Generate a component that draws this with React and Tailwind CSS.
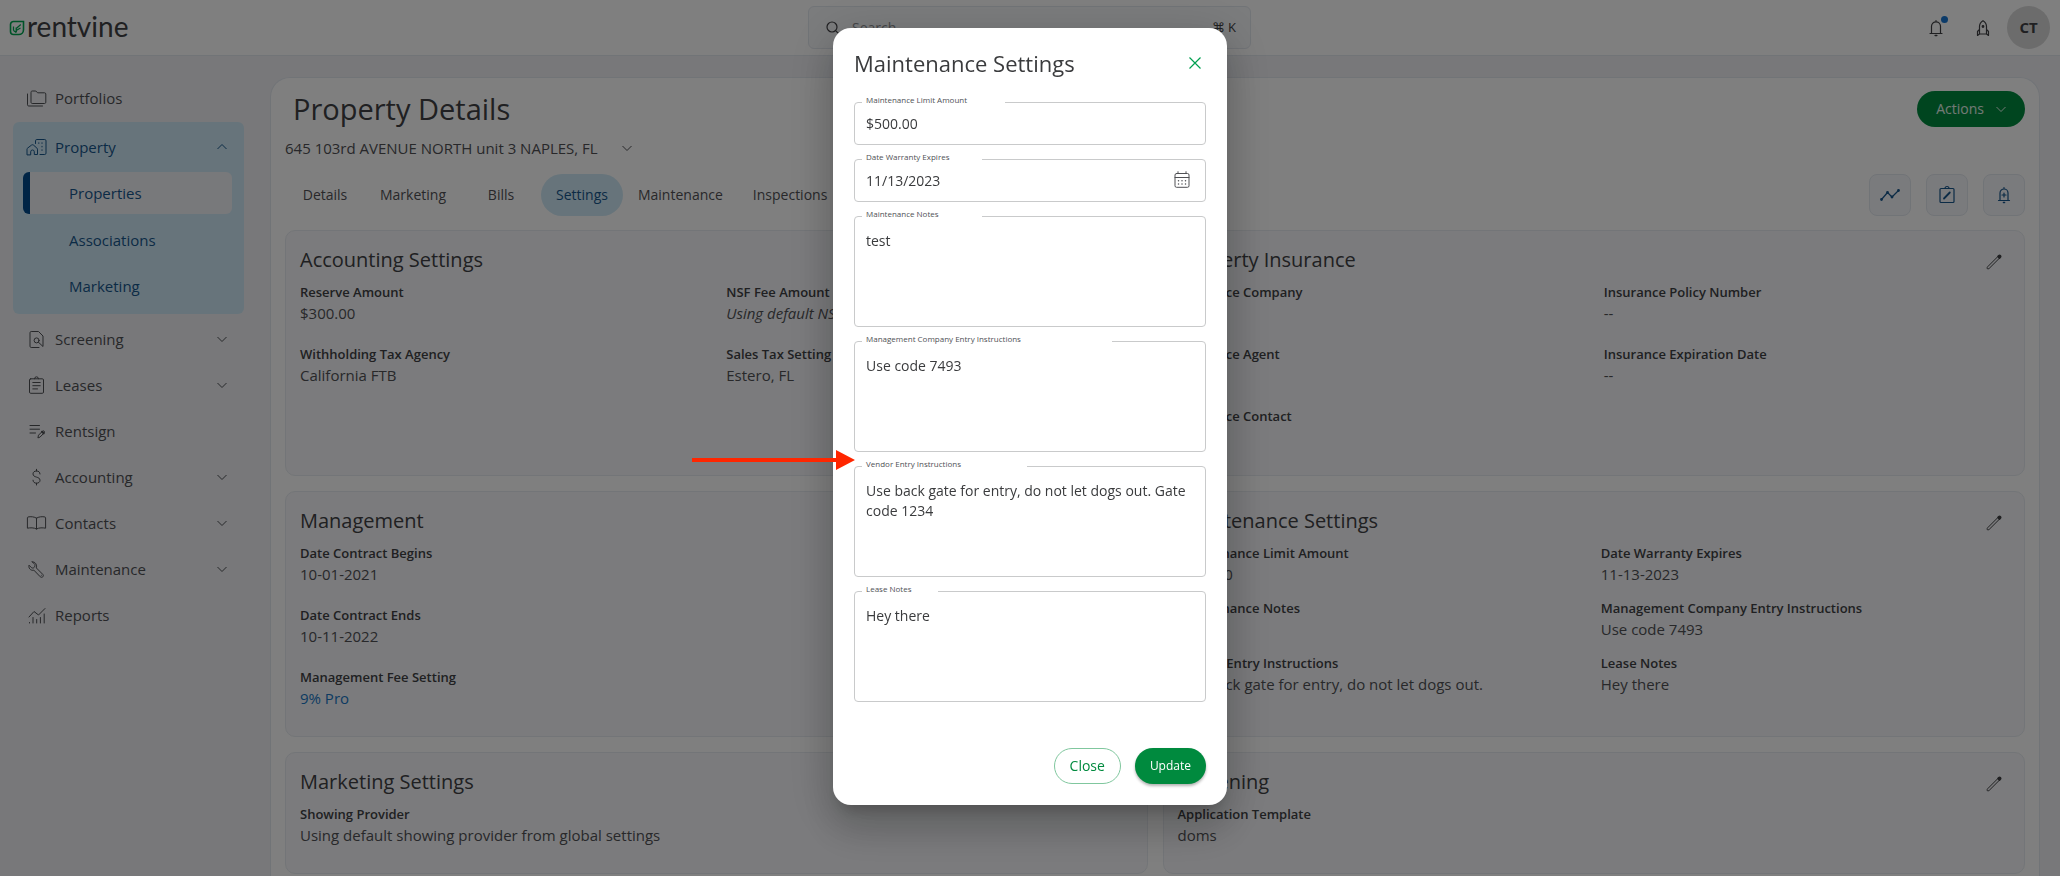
import { useState } from 'react'

const navItems = [
  { label: 'Screening', icon: 'screening', expandable: true },
  { label: 'Leases', icon: 'leases', expandable: true },
  { label: 'Rentsign', icon: 'rentsign' },
  { label: 'Accounting', icon: 'accounting', expandable: true },
  { label: 'Contacts', icon: 'contacts', expandable: true },
  { label: 'Maintenance', icon: 'maintenance', expandable: true },
  { label: 'Reports', icon: 'reports' },
]

const tabs = ['Details', 'Marketing', 'Bills', 'Settings', 'Maintenance', 'Inspections']

const icons = {
  portfolios: (
    <>
      <path d="M5 4.200c0-.7.5-1.200 1.200-1.200h3.600l1.800 1.800h7c.7 0 1.200.5 1.200 1.200v8.300c0 .7-.5 1.200-1.200 1.200H6.200c-.7 0-1.200-.5-1.200-1.200z" />
      <path d="M1.500 6v10.800c0 .7.5 1.200 1.200 1.200H16.500" />
    </>
  ),
  property: (
    <>
      <path d="M1 17.500v-5.300c0-.5.2-.9.6-1.100l3.900-3c.6-.5 1.400-.5 2 0l3.400 3c.4.300.6.7.6 1.100v5.300H8.300v-2.700a1.800 1.800 0 0 0-3.600 0v2.700z" />
      <path d="M9.500 6.500V3.800c0-.8.5-1.300 1.300-1.300h7.900c.8 0 1.300.5 1.300 1.300v12.400c0 .8-.5 1.300-1.300 1.300H14" />
      <path d="M12.800 5.800v.6M16 5.800v.6M16 9.300v.6M16 12.800v.6" />
    </>
  ),
  screening: (
    <>
      <path d="M13 18.500H5.200c-.7 0-1.200-.5-1.200-1.200V3.700c0-.7.5-1.200 1.200-1.200H12.500L17 7v10.500l-4.600-4.300" />
      <circle cx="10.600" cy="11.400" r="2.500" />
    </>
  ),
  leases: (
    <>
      <rect x="3.500" y="3.800" width="14" height="14.500" rx="1.200" />
      <path d="M8.500 3.800a2 2 0 0 1 4 0M6.800 7.500h7.400M6.800 10.700h7.400M6.800 13.900h4.700" />
    </>
  ),
  rentsign: (
    <>
      <path d="M4 4.500h9.500M4 8.200h9.500M4 12h5.500" />
      <path d="M12 16.500l.5-2.300 4-4c.5-.5 1.300-.5 1.700 0s.4 1.200 0 1.700l-4 4z" />
      <path d="M16 10.700l1.700 1.700" strokeWidth="2" />
    </>
  ),
  accounting: (
    <path d="M14 7c0-2-1.500-3-3.500-3S7 5.100 7 6.900c0 4.200 7 2.200 7 6.400 0 1.800-1.500 2.900-3.500 2.900S7 15.100 7 13.200M10.500 2.300V4M10.500 16.200V18" />
  ),
  contacts: (
    <path d="M10.500 5.200C8.500 3.600 4.500 3.400 2 4c-.4.100-.6.400-.6.800v10.400c2.800-.6 6.600-.6 9.100.8 2.500-1.400 6.300-1.400 9.100-.8V4.800c0-.4-.2-.7-.6-.8-2.500-.6-6.500-.4-8.500 1.200zM10.500 5.200V16" />
  ),
  maintenance: (
    <path d="M6.300 2.900l2.600 2.600c.3 1-.2 2.800-1.200 3.300-.9.400-1.700.3-2.300-.2L3 6.200c-.4 2 .3 3.600 1.500 4.400 1 .7 2.200.9 3.300.5l6.500 6.700c.7.700 1.800.7 2.500 0s.7-1.700 0-2.400l-6.500-6.500c.5-1.300.4-2.900-.5-4.200-.8-1.200-2-1.900-3.500-1.800zM15.300 16.300h.01" />
  ),
  reports: (
    <path d="M3 12l5-5.500 4.500 3.500L19 3.500M3.500 17.500v.5M7 12.500V18M10.700 14.500V18M14.400 12.500V18M18.200 9V18" />
  ),
}

function NavIcon({ name }) {
  return (
    <svg
      viewBox="0 0 21 21"
      className="size-[21px] shrink-0"
      fill="none"
      stroke="currentColor"
      strokeWidth="1"
      strokeLinecap="round"
      strokeLinejoin="round"
      aria-hidden="true"
    >
      {icons[name]}
    </svg>
  )
}

function Chevron({ up }) {
  return (
    <svg viewBox="0 0 10 10" className="size-[10px] shrink-0" fill="none" stroke="currentColor" strokeWidth="1" aria-hidden="true">
      <path d={up ? 'M.5 7L5 2.500 9.500 7' : 'M.5 3L5 7.500 9.500 3'} />
    </svg>
  )
}

function Header() {
  return (
    <header className="flex h-14 shrink-0 items-center justify-between border-b border-[#e3e8ef] bg-white pl-[9px] pr-[10px]">
      <a href="#home" className="flex flex-1 items-center gap-[2px] text-[#404144]">
        <svg viewBox="0 0 16 16" className="size-4" fill="none" stroke="#00a651" aria-hidden="true">
          <path d="M4.500 1.500h10v8.300a4.700 4.700 0 0 1-4.700 4.700H4.500a3 3 0 0 1-3-3v-7a3 3 0 0 1 3-3z" strokeWidth="1.600" />
          <path d="M4.500 6.500v4M7.200 12.500V7.500M7.200 12.500l-2.700-2M7.200 10.500l4.300-2.500M7.200 8.500l4.600-4" strokeWidth="1.300" />
        </svg>
        <span className="pb-1 font-['Lato',sans-serif] text-[28px] leading-none">rentvine</span>
      </a>
      <label className="flex h-[43px] w-[443px] items-center rounded-[6px] border border-[#e3e8ef] bg-[#f7f8fb] pl-[17px] pr-[14px]">
        <svg viewBox="0 0 14 14" className="size-[14px] text-[#404144]" fill="none" stroke="currentColor" strokeWidth="1.200" aria-hidden="true">
          <circle cx="6" cy="6" r="5" />
          <path d="M9.600 9.600L13.500 13.500" />
        </svg>
        <input type="search" placeholder="Search" aria-label="Search" className="min-w-0 flex-1 px-3 text-sm outline-none placeholder:text-[#8a8d91]" />
        <kbd className="font-['Open_Sans','DejaVu_Sans',sans-serif] text-[13px] text-[#404144]">⌘ K</kbd>
      </label>
      <div className="flex flex-1 items-center justify-end text-[#404144]">
        <button type="button" aria-label="Notifications" className="relative mr-1 p-3">
          <svg viewBox="0 0 18 18" className="size-[18px]" fill="none" stroke="currentColor" strokeWidth="1.200" strokeLinecap="round" aria-hidden="true">
            <path d="M3 14.500h12M4.500 14.500V7.300a4.500 4.500 0 0 1 9 0v7.200M9 1.500v1.300" />
            <path d="M8.200 16.500h1.600" strokeWidth="1.600" />
          </svg>
          <span className="absolute right-[9px] top-[9px] size-[7px] rounded-full bg-[#1976d2]" />
        </button>
        <button type="button" aria-label="What's new" className="p-3">
          <svg viewBox="0 0 18 18" className="mx-px size-[18px]" fill="none" stroke="currentColor" strokeWidth="1.200" strokeLinejoin="round" aria-hidden="true">
            <path d="M5.500 15V7.500C5.500 5 7 3 9 1.700c2 1.300 3.500 3.300 3.500 5.800V15zM5.500 10.300L3.500 12.500v4l2-1.500M12.500 10.300l2 2.200v4l-2-1.500" />
            <circle cx="9" cy="7.500" r=".8" fill="currentColor" />
          </svg>
        </button>
        <button type="button" className="ml-[2px] size-[43px] rounded-full bg-[#d8d8d8] text-[15px] font-bold">CT</button>
      </div>
    </header>
  )
}

function Sidebar() {
  return (
    <nav className="flex w-[270px] shrink-0 flex-col pl-[13px] pr-[26px] pt-[18px] text-[15px] text-[#4f5054]">
      <a href="#portfolios" className="flex h-12 items-center gap-2 px-[13px]">
        <NavIcon name="portfolios" />
        Portfolios
      </a>
      <div className="rounded-[6px] bg-[#cfe9f6] px-[10px] pb-[5px] text-[#17568c]">
        <button type="button" className="flex h-[50px] w-full items-center gap-2 pl-[3px] pr-[7px]">
          <NavIcon name="property" />
          Property
          <span className="ml-auto">
            <Chevron up />
          </span>
        </button>
        <a href="#properties" className="mb-[3px] mr-[2px] flex h-[42px] items-center rounded-[6px] border-l-[7px] border-[#004a8c] bg-[#f1f2f6] pl-[39px]">
          Properties
        </a>
        <a href="#associations" className="flex h-[46px] items-center pl-[46px]">Associations</a>
        <a href="#marketing" className="flex h-[46px] items-center pl-[46px]">Marketing</a>
      </div>
      <ul className="pt-[2px]">
        {navItems.map((item) => (
          <li key={item.label}>
            <button type="button" className="flex h-[46px] w-full items-center gap-2 pl-[13px] pr-[17px]">
              <NavIcon name={item.icon} />
              {item.label}
              {item.expandable && (
                <span className="ml-auto">
                  <Chevron />
                </span>
              )}
            </button>
          </li>
        ))}
      </ul>
    </nav>
  )
}

function SquareButton({ label, children }) {
  return (
    <button type="button" aria-label={label} className="flex size-[42px] items-center justify-center rounded-lg border border-[#e3e8ef] bg-[#f4f6fa] text-[#17568c]">
      <svg viewBox="0 0 20 20" className="size-5" fill="none" stroke="currentColor" strokeWidth="1.200" strokeLinecap="round" strokeLinejoin="round" aria-hidden="true">
        {children}
      </svg>
    </button>
  )
}

function Card({ title, children }) {
  return (
    <section className="rounded-[10px] border border-[#e7ebf0] bg-[#f6f7fa] px-[14px] pb-[27px] pt-[13px] text-[#404144]">
      <div className="flex items-center justify-between pr-2">
        <h2 className="text-xl leading-8">{title}</h2>
        <button type="button" aria-label={'Edit ' + title} className="pt-1">
          <svg viewBox="0 0 16 16" className="size-4" fill="none" stroke="currentColor" strokeWidth="1" strokeLinejoin="round" aria-hidden="true">
            <path d="M1.300 14.700c-.4-.4-.2-1.300.3-1.900L11.900 2.500l1.600 1.600L3.200 14.400c-.6.500-1.500.7-1.900.3z" />
            <path d="M11.900 2.500l.9-.9c.5-.4 1.100-.4 1.500 0l.1.100c.4.400.4 1 0 1.500l-.9.900z" fill="currentColor" strokeWidth="1.500" />
          </svg>
        </button>
      </div>
      {children}
    </section>
  )
}

function Detail({ label, link, italic, children }) {
  return (
    <div>
      <dt className="text-[13px] font-semibold leading-5">{label}</dt>
      <dd className="min-h-[22px] text-[15px] leading-[22px] text-[#505155]">
        {link ? <a href="#fee" className="text-[#1976c5]">{children}</a> : italic ? <em>{children}</em> : children}
      </dd>
    </div>
  )
}

function PropertyDetails() {
  return (
    <main className="mr-5 mt-[21px] min-w-0 flex-1 rounded-t-[20px] border border-b-0 border-[#e3e8ef] bg-white px-[14px] pt-[13px]">
      <div className="flex items-start justify-between">
        <h1 className="pl-2 text-[29px] leading-9 text-[#404144]">Property Details</h1>
        <button type="button" className="flex h-9 items-center gap-3 rounded-full bg-[#008a3e] px-[19px] text-sm text-white/90">
          Actions
          <Chevron />
        </button>
      </div>
      <button type="button" className="mt-[7px] flex h-7 items-center gap-6 text-[#505155]">
        <span className="text-[15px]">645 103rd AVENUE NORTH unit 3 NAPLES, FL</span>
        <Chevron />
      </button>
      <div className="mt-3 flex items-center justify-between">
        <div role="tablist" className="flex text-sm text-[#505155]">
          {tabs.map((tab) => (
            <button
              key={tab}
              type="button"
              role="tab"
              aria-selected={tab === 'Settings'}
              className={
                tab === 'Settings'
                  ? 'h-[42px] min-w-20 rounded-full bg-[#cfe9f6] px-[15px] text-[#17568c]'
                  : 'h-[42px] min-w-20 px-[15px]'
              }
            >
              {tab}
            </button>
          ))}
        </div>
        <div className="flex gap-[15px]">
          <SquareButton label="Activity">
            <path d="M1.500 14.500L7.500 7.500l4.500 4.500 6.500-6.500" />
            <path d="M1.500 14.500h.01M7.500 7.500h.01M12 12h.01M18.500 5.500h.01" strokeWidth="2.800" />
          </SquareButton>
          <SquareButton label="Notes">
            <rect x="3" y="3.500" width="14" height="14" rx="1" />
            <path d="M8 3.500a2 2 0 0 1 4 0" />
            <path d="M7 13.500L12.800 7.500" strokeWidth="1.800" />
          </SquareButton>
          <SquareButton label="Add reminder">
            <path d="M4.500 15.500h11M6 15.500V8a4 4 0 0 1 8 0v7.500M10 2.500v1.300M10 8v4M8 10h4" />
            <path d="M9.500 17.500h1" strokeWidth="1.600" />
          </SquareButton>
        </div>
      </div>

      <div className="mt-[14px] grid grid-cols-2 gap-[15px]">
        <Card title="Accounting Settings">
          <dl className="grid grid-cols-2 gap-5 pt-[6px]">
            <Detail label="Reserve Amount">$300.00</Detail>
            <Detail label="NSF Fee Amount" italic>Using default NSF fee</Detail>
            <Detail label="Withholding Tax Agency">California FTB</Detail>
            <Detail label="Sales Tax Setting">Estero, FL</Detail>
          </dl>
        </Card>
        <Card title="Property Insurance">
          <dl className="grid grid-cols-2 gap-5 pt-[6px]">
            <Detail label="Insurance Company">--</Detail>
            <Detail label="Insurance Policy Number">--</Detail>
            <Detail label="Insurance Agent">--</Detail>
            <Detail label="Insurance Expiration Date">--</Detail>
            <Detail label="Insurance Contact">--</Detail>
          </dl>
        </Card>
        <Card title="Management">
          <dl className="grid gap-5 pt-[6px]">
            <Detail label="Date Contract Begins">10-01-2021</Detail>
            <Detail label="Date Contract Ends">10-11-2022</Detail>
            <Detail label="Management Fee Setting" link>9% Pro</Detail>
          </dl>
        </Card>
        <Card title="Maintenance Settings">
          <dl className="grid grid-cols-2 gap-x-[14px] gap-y-[13px] pt-[6px]">
            <Detail label="Maintenance Limit Amount">$500.00</Detail>
            <Detail label="Date Warranty Expires">11-13-2023</Detail>
            <Detail label="Maintenance Notes">test</Detail>
            <Detail label="Management Company Entry Instructions">Use code 7493</Detail>
            <Detail label="Vendor Entry Instructions">Use back gate for entry, do not let dogs out.</Detail>
            <Detail label="Lease Notes">Hey there</Detail>
          </dl>
        </Card>
        <Card title="Marketing Settings">
          <dl className="pt-[6px]">
            <Detail label="Showing Provider">Using default showing provider from global settings</Detail>
          </dl>
        </Card>
        <Card title="Screening">
          <dl className="pt-[6px]">
            <Detail label="Application Template">doms</Detail>
          </dl>
        </Card>
      </div>
    </main>
  )
}

function Field({ id, label, labelWidth, value, onChange, multiline, children }) {
  const box = 'block w-full rounded-[4px] border border-[#c9cacb] px-[11px] text-sm text-[#3a3b3d] outline-none'

  return (
    <div className="relative">
      <label htmlFor={id} className={'absolute left-2 -top-2 bg-white pl-1 text-[8px] leading-3 text-[#505155] ' + labelWidth}>
        {label}
      </label>
      {multiline ? (
        <textarea id={id} value={value} onChange={onChange} className={box + ' h-[111px] resize-none py-[14px] leading-5'} />
      ) : (
        <input id={id} type="text" value={value} onChange={onChange} className={box + ' h-[43px]'} />
      )}
      {children}
    </div>
  )
}

function MaintenanceModal({ onClose }) {
  const [form, setForm] = useState({
    limit: '$500.00',
    warranty: '11/13/2023',
    notes: 'test',
    company: 'Use code 7493',
    vendor: 'Use back gate for entry, do not let dogs out. Gate code 1234',
    lease: 'Hey there',
  })

  const bind = (key) => ({
    id: key,
    value: form[key],
    onChange: (e) => setForm({ ...form, [key]: e.target.value }),
  })

  return (
    <div className="fixed inset-0 flex items-start justify-center overflow-hidden bg-black/50 pt-7">
      <div
        role="dialog"
        aria-modal="true"
        aria-labelledby="modal-title"
        className="relative w-[394px] rounded-[18px] bg-white px-[21px] pb-[21px] pt-[17px] shadow-[0_11px_15px_-7px_rgba(0,0,0,0.2),0_24px_38px_3px_rgba(0,0,0,0.14),0_9px_46px_8px_rgba(0,0,0,0.12)]"
      >
        <div className="flex h-9 items-center justify-between pr-[5px]">
          <h2 id="modal-title" className="text-[22px] text-[#3a3b3d]">Maintenance Settings</h2>
          <button type="button" aria-label="Close dialog" onClick={onClose} className="text-[#00a050]">
            <svg viewBox="0 0 12 12" className="size-3" fill="none" stroke="currentColor" strokeWidth="1.200" aria-hidden="true">
              <path d="M.5.5l11 11M11.500.5l-11 11" />
            </svg>
          </button>
        </div>

        <form className="flex flex-col gap-[14px] pt-[21px]" onSubmit={(e) => e.preventDefault()}>
          <Field {...bind('limit')} label="Maintenance Limit Amount" labelWidth="w-[143px]" />
          <Field {...bind('warranty')} label="Date Warranty Expires" labelWidth="w-[120px]">
            <button type="button" aria-label="Choose date" className="absolute right-4 top-3 text-[#505155]">
              <svg viewBox="0 0 16 17" className="h-[17px] w-4" fill="none" stroke="currentColor" strokeWidth="1" strokeLinecap="round" aria-hidden="true">
                <rect x="1" y="2.500" width="14" height="13.800" rx="1.500" />
                <path d="M1 6.500h14M4 .7v1.800M12 .7v1.800" />
                <path d="M4.500 9.800h.01M8 9.800h.01M11.500 9.800h.01M4.500 13h.01M8 13h.01M11.500 13h.01" strokeWidth="1.500" />
              </svg>
            </button>
          </Field>
          <Field {...bind('notes')} label="Maintenance Notes" labelWidth="w-[120px]" multiline />
          <Field {...bind('company')} label="Management Company Entry Instructions" labelWidth="w-[250px]" multiline />
          <Field {...bind('vendor')} label="Vendor Entry Instructions" labelWidth="w-[165px]" multiline />
          <Field {...bind('lease')} label="Lease Notes" labelWidth="w-[76px]" multiline />

          <div className="flex justify-end gap-[14px] pt-8">
            <button type="button" onClick={onClose} className="h-9 rounded-full border border-[#80c79e] px-[15px] text-sm text-[#008a3e]">
              Close
            </button>
            <button type="submit" className="h-9 rounded-full bg-[#008a3e] px-[15px] text-xs text-white shadow-[0_2px_3px_rgba(0,0,0,0.3)]">
              Update
            </button>
          </div>
        </form>

        {/* callout pointing at the vendor instructions */}
        <svg viewBox="0 0 163 20" className="absolute right-[372px] top-[422px] h-5 w-[163px]" fill="#ff2600" aria-hidden="true">
          <path d="M0 8h144V0l19 10-19 10v-8H0z" />
        </svg>
      </div>
    </div>
  )
}

function App() {
  const [showModal, setShowModal] = useState(true)

  return (
    <div className="flex h-screen flex-col overflow-hidden bg-[#f0f1f5] font-['Open_Sans',sans-serif]">
      <Header />
      <div className="flex min-h-0 flex-1">
        <Sidebar />
        <PropertyDetails />
      </div>
      {showModal && <MaintenanceModal onClose={() => setShowModal(false)} />}
    </div>
  )
}

export default App
